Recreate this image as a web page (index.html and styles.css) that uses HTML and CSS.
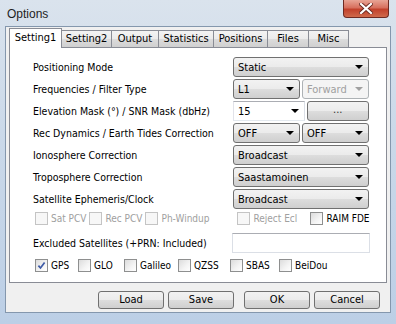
FILE: index.html
```html
<!DOCTYPE html>
<html lang="en">
  <head>
    <meta charset="UTF-8" />
    <title>Options</title>
    <link rel="stylesheet" href="styles.css">
  </head>
  <body>
    <div class="b-window">
      <div class="b-titlebar">
        <span class="b-titlebar__text">Options</span>
        <div class="b-titlebar__close">
          <svg width="14" height="11" viewBox="0 0 14 11">
            <path d="M2 1 L12 10 M12 1 L2 10" stroke="#6b2a22" stroke-width="4" stroke-linecap="square"/>
            <path d="M2 1 L12 10 M12 1 L2 10" stroke="#ffffff" stroke-width="2.2" stroke-linecap="square"/>
          </svg>
        </div>
      </div>

      <div class="b-client">
        <div class="b-tabs">
          <div class="b-tabs__tab b-tabs__tab_active b-tabs__tab_w_53">Setting1</div>
          <div class="b-tabs__tab b-tabs__tab_w_50">Setting2</div>
          <div class="b-tabs__tab b-tabs__tab_w_47">Output</div>
          <div class="b-tabs__tab b-tabs__tab_w_55">Statistics</div>
          <div class="b-tabs__tab b-tabs__tab_w_54">Positions</div>
          <div class="b-tabs__tab b-tabs__tab_w_41">Files</div>
          <div class="b-tabs__tab b-tabs__tab_w_40">Misc</div>
        </div>

        <div class="b-page">
          <div class="b-row">
            <span class="b-row__label">Positioning Mode</span>
            <div class="b-row__ctrl">
              <div class="b-combo b-combo_full"><span>Static</span><i class="b-combo__arrow"></i></div>
            </div>
          </div>
          <div class="b-row">
            <span class="b-row__label">Frequencies / Filter Type</span>
            <div class="b-row__ctrl">
              <div class="b-combo"><span>L1</span><i class="b-combo__arrow"></i></div>
              <div class="b-combo b-combo_disabled"><span>Forward</span><i class="b-combo__arrow"></i></div>
            </div>
          </div>
          <div class="b-row">
            <span class="b-row__label">Elevation Mask (&deg;) / SNR Mask (dbHz)</span>
            <div class="b-row__ctrl">
              <div class="b-combo b-combo_edit"><span>15</span><i class="b-combo__arrow"></i></div>
              <div class="b-button b-button_small">...</div>
            </div>
          </div>
          <div class="b-row">
            <span class="b-row__label">Rec Dynamics / Earth Tides Correction</span>
            <div class="b-row__ctrl">
              <div class="b-combo"><span>OFF</span><i class="b-combo__arrow"></i></div>
              <div class="b-combo"><span>OFF</span><i class="b-combo__arrow"></i></div>
            </div>
          </div>
          <div class="b-row">
            <span class="b-row__label">Ionosphere Correction</span>
            <div class="b-row__ctrl">
              <div class="b-combo b-combo_full"><span>Broadcast</span><i class="b-combo__arrow"></i></div>
            </div>
          </div>
          <div class="b-row">
            <span class="b-row__label">Troposphere Correction</span>
            <div class="b-row__ctrl">
              <div class="b-combo b-combo_full"><span>Saastamoinen</span><i class="b-combo__arrow"></i></div>
            </div>
          </div>
          <div class="b-row">
            <span class="b-row__label">Satellite Ephemeris/Clock</span>
            <div class="b-row__ctrl">
              <div class="b-combo b-combo_full"><span>Broadcast</span><i class="b-combo__arrow"></i></div>
            </div>
          </div>

          <div class="b-checks b-checks_opts">
            <label class="b-check b-check_disabled b-check_w_51"><i class="b-check__box"></i>Sat PCV</label>
            <label class="b-check b-check_disabled b-check_w_51"><i class="b-check__box"></i>Rec PCV</label>
            <label class="b-check b-check_disabled b-check_w_92"><i class="b-check__box"></i>Ph-Windup</label>
            <label class="b-check b-check_disabled b-check_w_73"><i class="b-check__box"></i>Reject Ecl</label>
            <label class="b-check"><i class="b-check__box"></i>RAIM FDE</label>
          </div>

          <div class="b-row b-row_excl">
            <span class="b-row__label">Excluded Satellites (+PRN: Included)</span>
            <div class="b-edit"></div>
          </div>

          <div class="b-checks b-checks_sys">
            <label class="b-check b-check_w_43"><i class="b-check__box">
              <svg width="9" height="9" viewBox="0 0 9 9"><path d="M1.4 4.6 L3.5 7 L7.6 1.4" fill="none" stroke="#3d5aa6" stroke-width="1.7"/></svg>
            </i>GPS</label>
            <label class="b-check b-check_w_46"><i class="b-check__box"></i>GLO</label>
            <label class="b-check b-check_w_54"><i class="b-check__box"></i>Galileo</label>
            <label class="b-check b-check_w_52"><i class="b-check__box"></i>QZSS</label>
            <label class="b-check b-check_w_49"><i class="b-check__box"></i>SBAS</label>
            <label class="b-check"><i class="b-check__box"></i>BeiDou</label>
          </div>
        </div>

        <div class="b-buttons">
          <div class="b-button">Load</div>
          <div class="b-button">Save</div>
          <div class="b-button b-button_gap">OK</div>
          <div class="b-button">Cancel</div>
        </div>
      </div>
    </div>
  </body>
</html>
```

FILE: styles.css
```css
body
{
  margin: 0;
  font-family: "DejaVu Sans Condensed", "Liberation Sans", sans-serif;
  font-size: 10.5px;
  color: #000;
}

.b-window
{
  width: 396px;
  height: 324px;
  box-sizing: border-box;
  display: flex;
  flex-direction: column;
  background: linear-gradient(to bottom, #dae3ed 0%, #cbd9e9 40%, #bccfe6 100%);
  padding: 0 5px 11px 5px;
}

.b-titlebar
{
  height: 26px;
  display: flex;
  justify-content: space-between;
  align-items: flex-start;
  padding-left: 2px;
  padding-right: 2px;
}

.b-titlebar__text
{
  font-family: "Liberation Sans", sans-serif;
  font-size: 12px;
  margin-top: 7px;
  color: #1e1e1e;
}

.b-titlebar__close
{
  width: 46px;
  height: 18px;
  box-sizing: border-box;
  border: 1px solid #6e2a22;
  border-top: none;
  border-radius: 0 0 4px 4px;
  background: linear-gradient(to bottom, #e8a495 0%, #d7705e 45%, #c2412c 55%, #cf6a4c 100%);
  display: flex;
  align-items: center;
  justify-content: center;
}

.b-client
{
  flex: 1;
  background: #f0f0f0;
  border: 1px solid #8497ad;
  padding: 1px 3px 0 3px;
  display: flex;
  flex-direction: column;
}

.b-tabs
{
  display: flex;
  align-items: flex-end;
  height: 19px;
}

.b-tabs__tab
{
  box-sizing: border-box;
  height: 17px;
  border: 1px solid #898c95;
  border-bottom: none;
  border-left: none;
  background: linear-gradient(to bottom, #f3f3f3 0%, #ebebeb 50%, #dcdcdc 51%, #d0d0d0 100%);
  text-align: center;
  line-height: 15px;
  font-size: 11px;
}

.b-tabs__tab_active
{
  height: 20px;
  border-left: 1px solid #898c95;
  background: #fff;
  margin-bottom: -1px;
  position: relative;
  z-index: 1;
  line-height: 17px;
}

.b-tabs__tab_w_53 { width: 53px; }
.b-tabs__tab_w_50 { width: 50px; }
.b-tabs__tab_w_47 { width: 47px; }
.b-tabs__tab_w_55 { width: 55px; }
.b-tabs__tab_w_54 { width: 54px; }
.b-tabs__tab_w_41 { width: 41px; }
.b-tabs__tab_w_40 { width: 40px; }

.b-page
{
  height: 236px;
  box-sizing: border-box;
  background: #fff;
  border: 1px solid #898c95;
  padding: 9px 17px 0 23px;
}

.b-row
{
  display: flex;
  align-items: center;
  height: 20px;
  margin-bottom: 2px;
}

.b-row__label
{
  flex: 1;
  white-space: nowrap;
}

.b-row__ctrl
{
  width: 136px;
  display: flex;
  gap: 2px;
}

.b-combo
{
  flex: 1;
  height: 20px;
  box-sizing: border-box;
  border: 1px solid #707070;
  border-radius: 3px;
  background: linear-gradient(to bottom, #f2f2f2 0%, #ebebeb 50%, #dddddd 51%, #cfcfcf 100%);
  display: flex;
  align-items: center;
  justify-content: space-between;
  padding: 0 5px 0 4px;
  font-size: 11px;
}

.b-combo_full
{
  width: 136px;
}

.b-combo_disabled
{
  border-color: #adb2b5;
  background: #f4f4f4;
  color: #a0a0a0;
}

.b-combo_disabled .b-combo__arrow
{
  border-top-color: #a0a0a0;
}

.b-combo_edit
{
  background: #fff;
  border-color: #abadb3 #dbdfe6 #e3e9ef #e2e3ea;
  border-radius: 0;
}

.b-combo__arrow
{
  width: 0;
  height: 0;
  border-left: 4px solid transparent;
  border-right: 4px solid transparent;
  border-top: 4px solid #000;
}

.b-button
{
  width: 66px;
  height: 18px;
  box-sizing: border-box;
  border: 1px solid #707070;
  border-radius: 3px;
  background: linear-gradient(to bottom, #f2f2f2 0%, #ebebeb 50%, #dddddd 51%, #cfcfcf 100%);
  text-align: center;
  line-height: 16px;
  font-size: 11px;
}

.b-button_small
{
  flex: 1;
  height: 20px;
  line-height: 15px;
  color: #333;
}

.b-checks
{
  display: flex;
  align-items: center;
  height: 13px;
  margin-left: 2px;
  font-size: 10px;
}

.b-checks_opts
{
  margin-top: 3px;
}

.b-checks_sys
{
  margin-top: 6px;
}

.b-check
{
  display: flex;
  align-items: center;
  gap: 3px;
  white-space: nowrap;
  flex-shrink: 0;
  box-sizing: border-box;
  padding-right: 3px;
  min-width: max-content;
}

.b-check_w_43 { width: 43px; }
.b-check_w_46 { width: 46px; }
.b-check_w_49 { width: 49px; }
.b-check_w_51 { width: 51px; }
.b-check_w_52 { width: 52px; }
.b-check_w_54 { width: 54px; }
.b-check_w_73 { width: 73px; }
.b-check_w_92 { width: 92px; }

.b-check__box
{
  width: 13px;
  height: 13px;
  box-sizing: border-box;
  border: 1px solid #8e8f8f;
  background: linear-gradient(135deg, #dcdcdc 0%, #f4f4f4 60%, #ffffff 100%);
  display: flex;
  align-items: center;
  justify-content: center;
}

.b-check_disabled
{
  color: #a0a0a0;
}

.b-check_disabled .b-check__box
{
  border-color: #c4c4c4;
  background: #f7f7f7;
}

.b-row_excl
{
  margin-top: 8px;
  margin-bottom: 0;
}

.b-edit
{
  width: 138px;
  height: 20px;
  box-sizing: border-box;
  margin-right: -1px;
  border: 1px solid #dbdfe6;
  border-top-color: #abadb3;
  background: #fff;
}

.b-buttons
{
  display: flex;
  justify-content: flex-end;
  gap: 4px;
  margin-top: 8px;
  padding-right: 7px;
}

.b-button_gap
{
  margin-left: 6px;
}
```
